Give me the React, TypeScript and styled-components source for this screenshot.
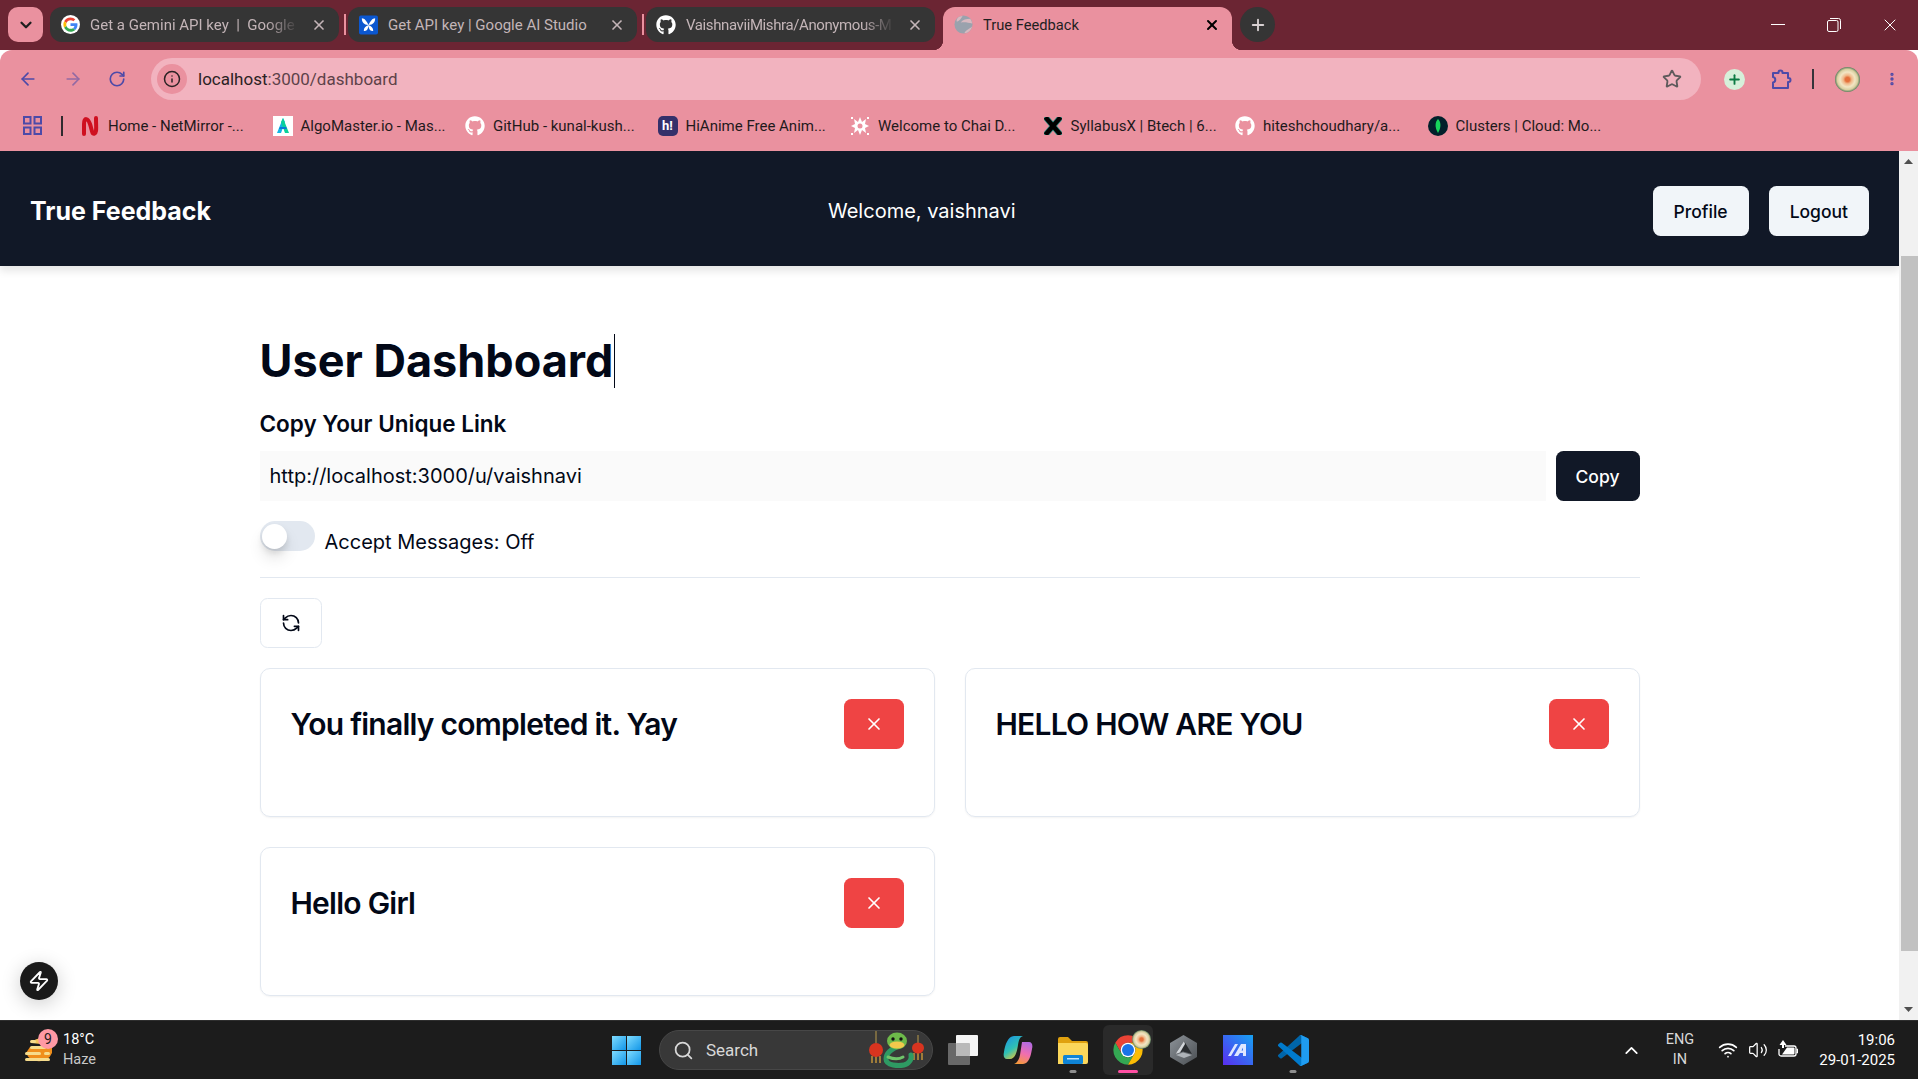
import React from 'react'
import styled, { createGlobalStyle } from 'styled-components'
import {
  ArrowLeft,
  ArrowRight,
  ChevronDown,
  ChevronUp,
  Info,
  MoreVertical,
  Plus,
  RefreshCcw,
  RotateCw,
  Search,
  Star,
  Volume2,
  Wifi,
  X,
  Zap,
} from 'lucide-react'
import { FaGithub } from 'react-icons/fa'

const GlobalStyle = createGlobalStyle`
  html, body {
    margin: 0;
    padding: 0;
    height: 100%;
    overflow: hidden;
    background: #fff;
  }
  * {
    box-sizing: border-box;
  }
`

const Frame = styled.div`
  display: flex;
  flex-direction: column;
  width: 1918px;
  height: 1079px;
  overflow: hidden;
  font-family: Inter, 'Liberation Sans', sans-serif;
`

/* browser chrome */
const TabStrip = styled.div`
  display: flex;
  align-items: flex-start;
  flex: 0 0 50px;
  padding: 7px 0 0 8px;
  background: #6b2533;
  font-family: Roboto, 'Liberation Sans', sans-serif;
`
const TabMenu = styled.div`
  display: flex;
  align-items: center;
  justify-content: center;
  width: 35px;
  height: 35px;
  margin-right: 7px;
  border-radius: 10px;
  background: #ea919f;
  color: #1f1f1f;
`
const Tab = styled.div`
  display: flex;
  align-items: center;
  width: 289px;
  height: 35px;
  padding: 0 12px 0 10px;
  border-radius: 12px;
  background: #353535;
  color: #c4b5b8;
  font-size: 15px;
`
const ActiveTab = styled(Tab)`
  position: relative;
  height: 43px;
  margin-left: 8px;
  padding-bottom: 8px;
  border-radius: 12px 12px 0 0;
  background: #ea919f;
  color: #1f1f1f;
  font-size: 14.7px;

  &::before,
  &::after {
    content: '';
    position: absolute;
    bottom: 0;
    width: 10px;
    height: 10px;
  }
  &::before {
    left: -10px;
    background: radial-gradient(circle at 0 0, transparent 10px, #ea919f 10.5px);
  }
  &::after {
    right: -10px;
    background: radial-gradient(circle at 100% 0, transparent 10px, #ea919f 10.5px);
  }
`
const TabIcon = styled.div`
  display: flex;
  flex: 0 0 20px;
  align-items: center;
  justify-content: center;
  height: 20px;
  margin-right: 10px;
`
const TabTitle = styled.div<{ $tight?: boolean }>`
  flex: 1;
  margin-right: 12px;
  overflow: hidden;
  letter-spacing: ${({ $tight }) => ($tight ? '-0.4px' : 'normal')};
  white-space: pre;
  -webkit-mask-image: linear-gradient(90deg, #000 84%, transparent 100%);
  mask-image: linear-gradient(90deg, #000 84%, transparent 100%);
`
const PlainTabTitle = styled(TabTitle)`
  -webkit-mask-image: none;
  mask-image: none;
`
const TabSeparator = styled.div`
  flex: 0 0 2px;
  height: 21px;
  margin: 7px 2px 0 5px;
  background: #ea919f;
`
const NewTab = styled.div`
  display: flex;
  align-items: center;
  justify-content: center;
  width: 35px;
  height: 35px;
  margin-left: 8px;
  border-radius: 50%;
  background: #353535;
  color: #d8d0d2;
`
const WindowControls = styled.div`
  display: flex;
  margin-left: auto;
  margin-top: -7px;
  color: #fff;
`
const WindowButton = styled.div`
  display: flex;
  align-items: center;
  justify-content: center;
  width: 56px;
  height: 50px;
`
const Toolbar = styled.div`
  display: flex;
  align-items: center;
  flex: 0 0 50px;
  padding: 8px 18px 0 18px;
  border-radius: 12px 12px 0 0;
  background: #ea919f;
  color: #4d4aa8;
  font-family: Roboto, 'Liberation Sans', sans-serif;
`
const NavIcon = styled.div<{ $dim?: boolean }>`
  display: flex;
  margin-right: 25px;
  opacity: ${({ $dim }) => ($dim ? 0.55 : 1)};
`
const Omnibox = styled.div`
  display: flex;
  align-items: center;
  flex: 1;
  height: 42px;
  padding: 0 19px 0 6px;
  border-radius: 21px;
  background: #f2b3bf;
`
const SiteInfo = styled.div`
  display: flex;
  align-items: center;
  justify-content: center;
  width: 30px;
  height: 30px;
  margin-right: 11px;
  border-radius: 50%;
  background: #ea919f;
  color: #2b2224;
`
const Url = styled.div`
  flex: 1;
  color: #2b2224;
  font-size: 17px;
  span {
    color: #5e4249;
  }
`
const ToolbarEnd = styled.div`
  display: flex;
  align-items: center;
  margin-left: 23px;
`
const ToolbarDivider = styled.div`
  width: 2px;
  height: 20px;
  margin: 0 21px 0 20px;
  background: #35343a;
`
const GreenPlus = styled.div`
  display: flex;
  align-items: center;
  justify-content: center;
  width: 21px;
  height: 21px;
  margin-right: 26px;
  border-radius: 50%;
  background: #d6f0da;
  color: #0b7a43;
`
const Avatar = styled.div<{ $size: number }>`
  flex: none;
  width: ${({ $size }) => $size}px;
  height: ${({ $size }) => $size}px;
  border-radius: 50%;
  background: radial-gradient(circle, #e4703a 0 12%, #f0b98a 24%, #f2e6c4 42%, #d9cfa0 58%, #3a6a4c 74%, #16241c 100%);
`
const MenuDots = styled.div`
  display: flex;
  justify-content: center;
  width: 16px;
  margin-left: 24px;
`
const Bookmarks = styled.div`
  display: flex;
  align-items: center;
  flex: 0 0 51px;
  padding-left: 23px;
  background: #ea919f;
  color: #1f1a1c;
  font-family: Roboto, 'Liberation Sans', sans-serif;
  font-size: 15px;
`
const BookmarkDivider = styled.div`
  width: 2px;
  height: 20px;
  margin: 0 17px 0 19px;
  background: #2f2a2e;
`
const Bookmark = styled.div`
  display: flex;
  align-items: center;
  flex: 0 0 192.5px;
  white-space: nowrap;
`
const BookmarkIcon = styled.div`
  display: flex;
  flex: 0 0 20px;
  align-items: center;
  justify-content: center;
  height: 20px;
  margin-right: 8px;
`
const HiBadge = styled.div`
  display: flex;
  align-items: center;
  justify-content: center;
  width: 20px;
  height: 20px;
  border-radius: 5px;
  background: #34306a;
  color: #fff;
  font-size: 13px;
  font-weight: 700;
`

/* page */
const Viewport = styled.div`
  position: relative;
  display: flex;
  flex: 1;
  min-height: 0;
`
const Page = styled.main`
  flex: 1;
  overflow: hidden;
  background: #fff;
  color: #020817;
`
const Navbar = styled.nav`
  position: relative;
  display: flex;
  align-items: center;
  justify-content: space-between;
  height: 115px;
  padding: 5px 30px 0;
  background: #111827;
  box-shadow: 0 5px 8px rgba(0, 0, 0, 0.1);
  color: #fff;
`
const Brand = styled.a`
  font-size: 25px;
  font-weight: 700;
`
const Welcome = styled.span`
  margin-right: 20px;
  font-size: 20px;
  font-weight: 400;
`
const NavActions = styled.div`
  display: flex;
  gap: 20px;
`
const Button = styled.button<{ $variant?: 'light' | 'dark' | 'danger' | 'outline' }>`
  display: inline-flex;
  align-items: center;
  justify-content: center;
  flex: none;
  height: 50px;
  padding: 0 20px;
  border: ${({ $variant }) => ($variant === 'outline' ? '1px solid #e2e8f0' : 'none')};
  border-radius: 7.5px;
  background: ${({ $variant }) =>
    $variant === 'dark' ? '#111827' : $variant === 'danger' ? '#ef4444' : $variant === 'outline' ? '#fff' : '#f1f5f9'};
  color: ${({ $variant }) => ($variant === 'dark' || $variant === 'danger' ? '#fff' : '#020817')};
  font-family: inherit;
  font-size: 17.5px;
  font-weight: 500;
`
const NavButton = styled(Button)`
  padding: 0 21px;
`
const Container = styled.div`
  width: 1440px;
  margin: 37.5px auto 0;
  padding: 30px;
`
const Heading = styled.h1`
  margin: 0 0 18.5px;
  font-size: 45px;
  font-weight: 700;
  line-height: 50px;
`
const Caret = styled.span`
  display: inline-block;
  width: 1px;
  height: 54px;
  margin-left: 1px;
  background: #020817;
  vertical-align: -11px;
`
const SubHeading = styled.h2`
  margin: 0 0 10px;
  font-size: 22.5px;
  font-weight: 600;
  line-height: 35px;
`
const LinkRow = styled.div`
  display: flex;
  gap: 10px;
  margin-bottom: 20px;
`
const LinkInput = styled.div`
  display: flex;
  align-items: center;
  flex: 1;
  height: 50px;
  padding: 0 10px;
  background: #fafafa;
  font-size: 20px;
`
const ToggleRow = styled.div`
  display: flex;
  align-items: flex-start;
  height: 36px;
`
const Toggle = styled.div`
  position: relative;
  width: 55px;
  height: 30px;
  margin-right: 10px;
  border-radius: 15px;
  background: #e2e8f0;
`
const ToggleThumb = styled.div`
  position: absolute;
  top: 2.5px;
  left: 2.5px;
  width: 25px;
  height: 25px;
  border-radius: 50%;
  background: #fff;
  box-shadow: 0 10px 15px rgba(0, 0, 0, 0.1), 0 4px 6px rgba(0, 0, 0, 0.1);
`
const ToggleLabel = styled.span`
  padding-top: 6px;
  font-size: 20px;
  line-height: 30px;
`
const Divider = styled.hr`
  height: 1px;
  margin: 20px 0;
  border: none;
  background: #e2e8f0;
`
const Cards = styled.div`
  display: grid;
  grid-template-columns: 1fr 1fr;
  gap: 30px;
  margin-top: 20px;
`
const Card = styled.div`
  display: flex;
  align-items: flex-start;
  justify-content: space-between;
  height: 149px;
  padding: 30px;
  border: 1px solid #e2e8f0;
  border-radius: 10px;
  box-shadow: 0 1px 2px rgba(0, 0, 0, 0.05);
`
const CardTitle = styled.h3`
  margin: 0;
  font-size: 30px;
  font-weight: 600;
  letter-spacing: -0.75px;
  line-height: 50px;
`
const DevBadge = styled.div`
  position: absolute;
  left: 20px;
  bottom: 20px;
  display: flex;
  align-items: center;
  justify-content: center;
  width: 38px;
  height: 38px;
  border-radius: 50%;
  background: #1a1a1a;
  box-shadow: 0 4px 20px rgba(0, 0, 0, 0.2);
  color: #fff;
`
const Scrollbar = styled.div`
  display: flex;
  flex-direction: column;
  flex: 0 0 19px;
  background: #f1f1f1;
`
const ScrollArrow = styled.div`
  display: flex;
  align-items: center;
  justify-content: center;
  height: 21px;
`
const ScrollTrack = styled.div`
  flex: 1;
  padding: 84px 0 48px 2px;
`
const ScrollThumb = styled.div`
  height: 100%;
  background: #c1c1c1;
`

/* taskbar */
const Taskbar = styled.footer`
  display: flex;
  align-items: center;
  flex: 0 0 59px;
  border-top: 1px solid #2e2e2e;
  background: #1c1c1c;
  color: #fff;
  font-family: Roboto, 'Liberation Sans', sans-serif;
`
const WeatherBlock = styled.div`
  display: flex;
  align-items: center;
  flex: 0 0 612px;
  padding-left: 25px;
`
const WeatherIcon = styled.div`
  position: relative;
  width: 28px;
  height: 34px;
  margin-right: 10px;
`
const Badge = styled.div`
  position: absolute;
  top: -4px;
  left: 13px;
  display: flex;
  align-items: center;
  justify-content: center;
  width: 20px;
  height: 20px;
  border-radius: 50%;
  background: #ff99a4;
  color: #1c1c1c;
  font-size: 14px;
`
const TwoLines = styled.div<{ $align?: string }>`
  display: flex;
  flex-direction: column;
  gap: 2px;
  font-size: 14.5px;
  line-height: 18px;
  text-align: ${({ $align }) => $align || 'left'};
`
const Muted = styled.span`
  color: #c8c8c8;
`
const StartIcon = styled.div`
  display: flex;
  flex: none;
  margin-right: 18px;
`
const SearchPill = styled.div`
  display: flex;
  align-items: center;
  flex: 0 0 274px;
  height: 40px;
  margin-right: 5px;
  padding: 0 7px 0 13px;
  border: 1px solid #474747;
  border-radius: 20px;
  background: #383838;
  color: #d8d8d8;
  font-size: 17px;
`
const SearchLabel = styled.span`
  flex: 1;
  margin-left: 12px;
`
const TaskSlot = styled.div<{ $active?: boolean }>`
  position: relative;
  display: flex;
  align-items: center;
  justify-content: center;
  flex: 0 0 50px;
  height: 50px;
  margin-right: 5px;
  border-radius: 6px;
  background: ${({ $active }) => ($active ? '#2a2a2a' : 'transparent')};
`
const RunningDot = styled.div<{ $active?: boolean }>`
  position: absolute;
  bottom: 2px;
  left: 50%;
  width: ${({ $active }) => ($active ? 20 : 7)}px;
  height: 3px;
  border-radius: 2px;
  background: ${({ $active }) => ($active ? '#ff4fa3' : '#8d8d8d')};
  transform: translateX(-50%);
`
const ChromeAvatar = styled.div`
  position: absolute;
  top: 5px;
  right: 2px;
`
const Tray = styled.div`
  display: flex;
  align-items: center;
  margin-left: auto;
  padding-right: 23px;
`
const TrayCaret = styled.div`
  display: flex;
  margin-right: -3px;
`
const TrayLang = styled(TwoLines)`
  width: 30px;
  margin: 0 23px 0 26px;
  align-items: center;
  color: #d8d8d8;
`
const TrayIcon = styled.div`
  display: flex;
  margin-right: 10px;
`
const Clock = styled(TwoLines)`
  width: 97px;
  margin-left: -10px;
  font-size: 15px;
`

/* drawings */
const GoogleIcon = () => (
  <svg width="19" height="19" viewBox="0 0 48 48">
    <circle cx="24" cy="24" r="24" fill="#fff" />
    <path fill="#ea4335" d="M24 13c3 0 5.400 1 7.300 2.800l5-5C33.200 8 29 6 24 6 17 6 11 10 8 16l5.900 4.500C15.300 16.200 19.300 13 24 13z" />
    <path fill="#4285f4" d="M41.600 24.500c0-1.300-.1-2.500-.3-3.700H24v7.300h9.900c-.4 2.300-1.700 4.200-3.600 5.500l5.700 4.400c3.400-3.100 5.600-7.700 5.600-13.500z" />
    <path fill="#fbbc05" d="M13.900 27.600c-.4-1.100-.6-2.300-.6-3.600s.2-2.500.6-3.600L8 16c-1.300 2.400-2 5.100-2 8s.7 5.600 2 8l5.900-4.400z" />
    <path fill="#34a853" d="M24 42c4.900 0 9-1.600 12-4.400l-5.700-4.400c-1.600 1.100-3.700 1.700-6.300 1.700-4.700 0-8.700-3.200-10.100-7.400L8 32c3 6 9 10 16 10z" />
  </svg>
)

const StudioIcon = () => (
  <svg width="19" height="20" viewBox="0 0 20 20">
    <rect width="20" height="20" rx="2" fill="#0b57d0" />
    <path fill="#fff" d="M10 10C8 6 6 3 3 3c0 4 2 7 7 7zM10 10c2-4 4-7 7-7 0 4-2 7-7 7zM10 10c-3 1-5 3-5 6 3 1 5-2 5-6zM10 10c3 1 5 3 5 6-3 1-5-2-5-6z" />
  </svg>
)

const GlobeIcon = () => (
  <svg width="19" height="19" viewBox="0 0 20 20">
    <circle cx="10" cy="10" r="9.500" fill="#9aa2ad" />
    <path fill="#d9b9c0" d="M3 7c3-1 5-4 6-6C5 1 2 4 3 7zM11 19c1-3 5-4 8-7-1 4-4 7-8 7zM7 8c4-1 8 0 12 1 0-2-1-4-2-5-4 0-8 1-10 4z" />
  </svg>
)

const RestoreIcon = () => (
  <svg width="14" height="14" viewBox="0 0 14 14" fill="none" stroke="#fff" strokeWidth="1">
    <rect x="0.500" y="2.500" width="10.500" height="11" rx="1.500" />
    <path d="M3 .5h8.500A2 2 0 0 1 13.500 2.500V11" />
  </svg>
)

const ExtensionIcon = () => (
  <svg width="21" height="21" viewBox="0 0 21 21" fill="none" stroke="#4d4aa8" strokeWidth="2" strokeLinejoin="round">
    <path d="M2 4h5.500V3.500a2 2 0 0 1 4 0V4H17v5h.5a2 2 0 0 1 0 4H17v6H2v-5.500a2.800 2.800 0 0 0 0-5.500z" />
  </svg>
)

const AppsIcon = () => (
  <svg width="19" height="19" viewBox="0 0 19 19" fill="none" stroke="#4d4aa8" strokeWidth="2">
    <rect x="1" y="1" width="6.500" height="6.500" />
    <rect x="11.500" y="1" width="6.500" height="6.500" />
    <rect x="1" y="11.500" width="6.500" height="6.500" />
    <rect x="11.500" y="11.500" width="6.500" height="6.500" />
  </svg>
)

const MirrorIcon = () => (
  <svg width="18" height="20" viewBox="0 0 18 20" fill="none" stroke="#cf1020" strokeWidth="4" strokeLinecap="round">
    <path d="M3 18V8C3 1 7 2 9 8s2 11 4.500 9.500S15 12 15 2" />
  </svg>
)

const AlgoIcon = () => (
  <svg width="20" height="20" viewBox="0 0 20 20">
    <rect width="20" height="20" fill="#fff" />
    <path fill="#12b5e5" d="M10 2l2 4-4 11H4z" />
    <path fill="#0bd19a" d="M10 2l6 15h-4L8 6z" />
    <path fill="#0a7bd6" d="M7 11h6l1 2H6z" />
  </svg>
)

const ChaiIcon = () => (
  <svg width="20" height="20" viewBox="0 0 20 20" fill="#fff">
    <path d="M10 1l2 5 4-3-1 5 4 2-4 2 1 5-4-3-2 5-2-5-4 3 1-5-4-2 4-2-1-5 4 3z" />
    <circle cx="10" cy="10" r="2.500" fill="#ea919f" />
    <rect x="1" y="1" width="2" height="2" />
    <rect x="17" y="1" width="2" height="2" />
    <rect x="1" y="17" width="2" height="2" />
    <rect x="17" y="17" width="2" height="2" />
  </svg>
)

const HeavyX = () => (
  <svg width="18" height="18" viewBox="0 0 18 18" fill="none" strokeLinecap="square">
    <path d="M3 2l12 14M15 2L3 16" stroke="#2f8f86" strokeWidth="6" />
    <path d="M3 2l12 14M15 2L3 16" stroke="#000" strokeWidth="4.500" />
  </svg>
)

const MongoBookmark = () => (
  <svg width="20" height="20" viewBox="0 0 20 20">
    <circle cx="10" cy="10" r="10" fill="#02202b" />
    <path fill="#17d45c" d="M10 3c3 3 3.500 8 0 14-3.500-6-3-11 0-14z" />
  </svg>
)

const StartLogo = () => (
  <svg width="29" height="29" viewBox="0 0 29 29">
    <defs>
      <linearGradient id="win" x1="0" y1="0" x2="1" y2="1">
        <stop offset="0" stopColor="#7fdcff" />
        <stop offset="1" stopColor="#1296e8" />
      </linearGradient>
    </defs>
    <rect width="14" height="14" fill="url(#win)" />
    <rect x="15" width="14" height="14" fill="url(#win)" />
    <rect y="15" width="14" height="14" fill="url(#win)" />
    <rect x="15" y="15" width="14" height="14" fill="url(#win)" />
  </svg>
)

const SnakeIcon = () => (
  <svg width="57" height="38" viewBox="0 0 57 38">
    <path d="M8 0v12M50 4v10" stroke="#b89a4a" strokeWidth="1" />
    <path d="M4 25v7M8 25v7M12 25v7M46 22v7M50 22v7M54 22v7" stroke="#d6a13a" strokeWidth="1.300" />
    <ellipse cx="8" cy="19" rx="7" ry="7" fill="#d8341f" />
    <ellipse cx="50" cy="17" rx="6" ry="5.500" fill="#d8341f" />
    <path d="M28 16c-5 3-10 6-10 12 0 7 13 7 18 6s8-6 7-10" fill="none" stroke="#2e9a63" strokeWidth="5" strokeLinecap="round" />
    <path d="M20 26c5 2 10 3 15 0" fill="none" stroke="#6fc46a" strokeWidth="3" strokeLinecap="round" />
    <ellipse cx="29" cy="10" rx="10" ry="8.500" fill="#6db94a" />
    <ellipse cx="29" cy="14" rx="7.500" ry="3.500" fill="#f2c94c" />
    <circle cx="25" cy="8" r="1.700" fill="#111" />
    <circle cx="33" cy="8" r="1.700" fill="#111" />
  </svg>
)

const TaskViewIcon = () => (
  <svg width="31" height="30" viewBox="0 0 31 30">
    <rect x="0" y="8" width="22" height="22" rx="1" fill="#686868" />
    <rect x="8" y="0" width="22" height="21" rx="1" fill="#f4f4f4" />
    <rect x="8" y="8" width="14" height="13" rx="1" fill="#b9b9b9" />
  </svg>
)

const CopilotIcon = () => (
  <svg width="30" height="28" viewBox="0 0 30 28">
    <defs>
      <linearGradient id="cpA" x1="0" y1="0" x2="0.600" y2="1">
        <stop offset="0" stopColor="#1a8fe8" />
        <stop offset="0.600" stopColor="#2fc0b4" />
        <stop offset="1" stopColor="#e3c53a" />
      </linearGradient>
      <linearGradient id="cpB" x1="0.600" y1="0" x2="0.300" y2="1">
        <stop offset="0" stopColor="#b56be0" />
        <stop offset="0.500" stopColor="#f06eb0" />
        <stop offset="1" stopColor="#f59a3a" />
      </linearGradient>
    </defs>
    <path fill="url(#cpB)" d="M19 6h7c3 0 4 3 3 7-1 6-3 15-9 15h-9c3-1 5-4 6-9z" />
    <path fill="url(#cpA)" d="M11 0h9c-3 1-4 3-5 9-1 7-3 14-8 14H4c-3 0-4-3-3-7C2 9 5 0 11 0z" />
  </svg>
)

const FolderIcon = () => (
  <svg width="30" height="28" viewBox="0 0 30 28">
    <path fill="#e0a10f" d="M0 3a2 2 0 0 1 2-2h8l4 4h14a2 2 0 0 1 2 2v4H0z" />
    <path fill="#fbd75b" d="M0 7h28a2 2 0 0 1 2 2v17a2 2 0 0 1-2 2H0z" />
    <rect x="5" y="19" width="20" height="9" rx="1.500" fill="#0f84d6" />
    <rect x="9" y="22" width="12" height="1.500" fill="#bfe4fb" />
  </svg>
)

const ChromeIcon = () => (
  <svg width="32" height="32" viewBox="0 0 48 48">
    <path fill="#ea4335" d="M24 2A22 22 0 0 1 43.050 13H24A11 11 0 0 0 14.470 29.500L4.950 13A22 22 0 0 1 24 2z" />
    <path fill="#34a853" d="M4.950 13L14.470 29.500A11 11 0 0 0 33.530 29.500L24 46A22 22 0 0 1 4.950 13z" />
    <path fill="#fbbc05" d="M43.050 13H24A11 11 0 0 1 33.530 29.500L24 46A22 22 0 0 0 43.050 13z" />
    <circle cx="24" cy="24" r="11" fill="#fff" />
    <circle cx="24" cy="24" r="9" fill="#1a73e8" />
  </svg>
)

const HexIcon = () => (
  <svg width="27" height="30" viewBox="0 0 27 30">
    <defs>
      <linearGradient id="hex" x1="0" y1="0" x2="1" y2="1">
        <stop offset="0" stopColor="#8d9399" />
        <stop offset="1" stopColor="#4a4e52" />
      </linearGradient>
    </defs>
    <path fill="url(#hex)" d="M13.500 0L27 8v14l-13.500 8L0 22V8z" />
    <path fill="#2a2d30" d="M14 6l8 13-9-2.500L5.500 19z" />
    <path fill="#d2d6da" d="M14 6L5.500 19l4.500-1.500L15 9z" />
    <path fill="#aeb3b8" d="M6 20l7-2.500 9 2.500-8 3z" />
  </svg>
)

const MarkerIcon = () => (
  <svg width="30" height="30" viewBox="0 0 30 30">
    <defs>
      <linearGradient id="mk" x1="1" y1="0" x2="0" y2="1">
        <stop offset="0" stopColor="#16a2f2" />
        <stop offset="1" stopColor="#5a2df0" />
      </linearGradient>
    </defs>
    <rect width="30" height="30" fill="url(#mk)" />
    <path fill="#dfe6ff" d="M5 21l7-12h3L8 21zM11 21l7-12h5v12h-3v-3h-3l-2 3zM18.500 15.500H20V12.500z" />
  </svg>
)

const VsCodeIcon = () => (
  <svg width="31" height="31" viewBox="0 0 100 100">
    <path fill="#0065a9" d="M96.500 10.800L75.900.9a6.200 6.200 0 0 0-7.100 1.200L1.400 63.600a4.200 4.200 0 0 0 0 6.200l5.500 5a4.200 4.200 0 0 0 5.300.2L93.400 13.400a4.100 4.100 0 0 1 6.600 3.300V16.400a6.200 6.200 0 0 0-3.500-5.600z" />
    <path fill="#007acc" d="M96.500 89.200L75.900 99.100a6.200 6.200 0 0 1-7.100-1.200L1.400 36.400a4.200 4.200 0 0 1 0-6.200l5.500-5a4.200 4.200 0 0 1 5.300-.2l81.200 61.600a4.100 4.100 0 0 0 6.600-3.300v.3a6.200 6.200 0 0 1-3.500 5.600z" />
    <path fill="#1f9cf0" d="M75.900 99.100a6.200 6.200 0 0 1-7.100-1.200c2.300 2.300 6.200.7 6.200-2.600V4.700c0-3.300-3.900-4.900-6.200-2.600A6.200 6.200 0 0 1 75.900.9l20.600 9.900A6.200 6.200 0 0 1 100 16.400v67.200a6.200 6.200 0 0 1-3.500 5.600z" />
  </svg>
)

const HazeIcon = () => (
  <svg width="28" height="34" viewBox="0 0 28 34">
    <path fill="#f08f1c" d="M1 20a14 13 0 0 0 26 0V14H5z" />
    <path fill="#f6c65b" d="M6 10a12 12 0 0 1 20 2z" />
    <g fill="#f6dc8c">
      <rect x="5" y="7" width="6" height="3" rx="1.500" />
      <rect x="5" y="13" width="16" height="3" rx="1.500" />
      <rect x="0" y="19" width="16" height="3" rx="1.500" />
      <rect x="19" y="19" width="6" height="3" rx="1.500" />
      <rect x="0" y="25" width="25" height="3" rx="1.500" />
    </g>
  </svg>
)

const BatteryIcon = () => (
  <svg width="20" height="20" viewBox="0 0 20 20" fill="none" stroke="#fff" strokeWidth="1.300">
    <path d="M7 6h9a2 2 0 0 1 2 2v6a2 2 0 0 1-2 2H3a2 2 0 0 1-2-2V9" />
    <path d="M18.500 9.500h1v3h-1" />
    <path fill="#fff" d="M9 7.500h6.500a1 1 0 0 1 1 1v5a1 1 0 0 1-1 1H4z" stroke="none" />
    <path fill="#fff" stroke="none" d="M5 0L1.500 5H4v3h2V5h2.500z" />
  </svg>
)

const TriangleUp = () => (
  <svg width="9" height="5" viewBox="0 0 9 5">
    <path fill="#505050" d="M4.500 0L9 5H0z" />
  </svg>
)

const TriangleDown = () => (
  <svg width="9" height="5" viewBox="0 0 9 5">
    <path fill="#505050" d="M4.500 5L9 0H0z" />
  </svg>
)

const bookmarks = [
  { icon: <MirrorIcon />, label: 'Home - NetMirror -...' },
  { icon: <AlgoIcon />, label: 'AlgoMaster.io - Mas...' },
  { icon: <FaGithub size={20} color="#fff" />, label: 'GitHub - kunal-kush...' },
  { icon: <HiBadge>h!</HiBadge>, label: 'HiAnime Free Anim...' },
  { icon: <ChaiIcon />, label: 'Welcome to Chai D...' },
  { icon: <HeavyX />, label: 'SyllabusX | Btech | 6...' },
  { icon: <FaGithub size={20} color="#fff" />, label: 'hiteshchoudhary/a...' },
  { icon: <MongoBookmark />, label: 'Clusters | Cloud: Mo...' },
]

const messages = ['You finally completed it. Yay', 'HELLO HOW ARE YOU', 'Hello Girl']

const App = (): React.ReactElement => {
  return (
    <Frame>
      <GlobalStyle />
      <TabStrip>
        <TabMenu>
          <ChevronDown size={18} strokeWidth={3} />
        </TabMenu>
        <Tab>
          <TabIcon>
            <GoogleIcon />
          </TabIcon>
          <TabTitle>{'Get a Gemini API key  |  Google'}</TabTitle>
          <X size={16} strokeWidth={2.5} />
        </Tab>
        <TabSeparator />
        <Tab>
          <TabIcon>
            <StudioIcon />
          </TabIcon>
          <PlainTabTitle>Get API key | Google AI Studio</PlainTabTitle>
          <X size={16} strokeWidth={2.5} />
        </Tab>
        <TabSeparator />
        <Tab>
          <TabIcon>
            <FaGithub size={20} color="#fff" />
          </TabIcon>
          <TabTitle $tight>VaishnaviiMishra/Anonymous-M</TabTitle>
          <X size={16} strokeWidth={2.5} />
        </Tab>
        <ActiveTab>
          <TabIcon>
            <GlobeIcon />
          </TabIcon>
          <PlainTabTitle>True Feedback</PlainTabTitle>
          <X size={16} strokeWidth={3} color="#000" />
        </ActiveTab>
        <NewTab>
          <Plus size={18} strokeWidth={2.5} />
        </NewTab>
        <WindowControls>
          <WindowButton>
            <svg width="14" height="2" viewBox="0 0 14 2">
              <rect width="14" height="1" fill="#fff" />
            </svg>
          </WindowButton>
          <WindowButton>
            <RestoreIcon />
          </WindowButton>
          <WindowButton>
            <X size={20} strokeWidth={1.2} />
          </WindowButton>
        </WindowControls>
      </TabStrip>

      <Toolbar>
        <NavIcon>
          <ArrowLeft size={20} strokeWidth={2} />
        </NavIcon>
        <NavIcon $dim>
          <ArrowRight size={20} strokeWidth={2} />
        </NavIcon>
        <NavIcon>
          <RotateCw size={18} strokeWidth={2.2} />
        </NavIcon>
        <Omnibox>
          <SiteInfo>
            <Info size={18} strokeWidth={2} />
          </SiteInfo>
          <Url>
            localhost<span>:3000/dashboard</span>
          </Url>
          <Star size={20} color="#5f5a5c" strokeWidth={2.2} />
        </Omnibox>
        <ToolbarEnd>
          <GreenPlus>
            <Plus size={15} strokeWidth={3} />
          </GreenPlus>
          <ExtensionIcon />
          <ToolbarDivider />
          <Avatar $size={25} />
          <MenuDots>
            <MoreVertical size={20} strokeWidth={3} />
          </MenuDots>
        </ToolbarEnd>
      </Toolbar>

      <Bookmarks>
        <AppsIcon />
        <BookmarkDivider />
        {bookmarks.map((b) => (
          <Bookmark key={b.label}>
            <BookmarkIcon>{b.icon}</BookmarkIcon>
            {b.label}
          </Bookmark>
        ))}
      </Bookmarks>

      <Viewport>
        <Page>
          <Navbar>
            <Brand>True Feedback</Brand>
            <Welcome>Welcome, vaishnavi</Welcome>
            <NavActions>
              <NavButton>Profile</NavButton>
              <NavButton>Logout</NavButton>
            </NavActions>
          </Navbar>
          <Container>
            <Heading>
              User Dashboard
              <Caret />
            </Heading>
            <SubHeading>Copy Your Unique Link</SubHeading>
            <LinkRow>
              <LinkInput>http://localhost:3000/u/vaishnavi</LinkInput>
              <Button $variant="dark">Copy</Button>
            </LinkRow>
            <ToggleRow>
              <Toggle>
                <ToggleThumb />
              </Toggle>
              <ToggleLabel>Accept Messages: Off</ToggleLabel>
            </ToggleRow>
            <Divider />
            <Button $variant="outline">
              <RefreshCcw size={20} strokeWidth={2} />
            </Button>
            <Cards>
              {messages.map((m) => (
                <Card key={m}>
                  <CardTitle>{m}</CardTitle>
                  <Button $variant="danger">
                    <X size={20} strokeWidth={2} />
                  </Button>
                </Card>
              ))}
            </Cards>
          </Container>
        </Page>
        <DevBadge>
          <Zap size={22} strokeWidth={2} />
        </DevBadge>
        <Scrollbar>
          <ScrollArrow>
            <TriangleUp />
          </ScrollArrow>
          <ScrollTrack>
            <ScrollThumb />
          </ScrollTrack>
          <ScrollArrow>
            <TriangleDown />
          </ScrollArrow>
        </Scrollbar>
      </Viewport>

      <Taskbar>
        <WeatherBlock>
          <WeatherIcon>
            <HazeIcon />
            <Badge>9</Badge>
          </WeatherIcon>
          <TwoLines>
            <span>18°C</span>
            <Muted>Haze</Muted>
          </TwoLines>
        </WeatherBlock>
        <StartIcon>
          <StartLogo />
        </StartIcon>
        <SearchPill>
          <Search size={21} strokeWidth={2} />
          <SearchLabel>Search</SearchLabel>
          <SnakeIcon />
        </SearchPill>
        <TaskSlot>
          <TaskViewIcon />
        </TaskSlot>
        <TaskSlot>
          <CopilotIcon />
        </TaskSlot>
        <TaskSlot>
          <FolderIcon />
          <RunningDot />
        </TaskSlot>
        <TaskSlot $active>
          <ChromeIcon />
          <ChromeAvatar>
            <Avatar $size={19} />
          </ChromeAvatar>
          <RunningDot $active />
        </TaskSlot>
        <TaskSlot>
          <HexIcon />
        </TaskSlot>
        <TaskSlot>
          <MarkerIcon />
        </TaskSlot>
        <TaskSlot>
          <VsCodeIcon />
          <RunningDot />
        </TaskSlot>
        <Tray>
          <TrayCaret>
            <ChevronUp size={21} strokeWidth={2} />
          </TrayCaret>
          <TrayLang $align="center">
            <span>ENG</span>
            <span>IN</span>
          </TrayLang>
          <TrayIcon>
            <Wifi size={20} strokeWidth={2} />
          </TrayIcon>
          <TrayIcon>
            <Volume2 size={20} strokeWidth={1.5} />
          </TrayIcon>
          <TrayIcon>
            <BatteryIcon />
          </TrayIcon>
          <Clock $align="right">
            <span>19:06</span>
            <span>29-01-2025</span>
          </Clock>
        </Tray>
      </Taskbar>
    </Frame>
  )
}

export default App
